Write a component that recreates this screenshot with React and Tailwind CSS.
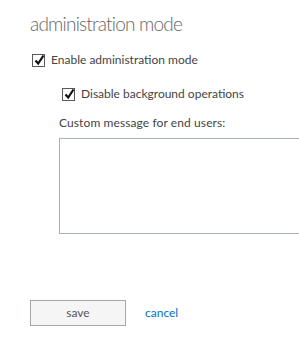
export default function App() {
  const Check = () => (
    <span className="relative inline-block w-[13px] h-[13px] border border-[#5a5a5a] bg-white shrink-0">
      <svg className="absolute left-[1px] top-[-1px]" width="11" height="12" viewBox="0 0 11 12">
        <path d="M1.5 6.5 L4.2 9.5 L9.5 1.5" fill="none" stroke="#111" strokeWidth="2.2" />
      </svg>
    </span>
  );
  return (
    <div className="w-[299px] h-[350px] bg-white overflow-hidden pt-[12px] pl-[30px] text-[#444]" style={{ fontFamily: 'Lato, "Open Sans", sans-serif' }}>
      <div className="text-[19px] leading-[24px] font-light text-[#666] tracking-[-0.8px]">administration mode</div>
      <div className="mt-[16px] h-[16px] flex items-center pl-[2px]">
        <Check />
        <span className="ml-[6px] text-[12px] leading-[16px] text-[#444]">Enable administration mode</span>
      </div>
      <div className="mt-[18px] h-[16px] flex items-center pl-[32px]">
        <Check />
        <span className="ml-[6px] text-[12px] leading-[16px] text-[#444]">Disable background operations</span>
      </div>
      <div className="mt-[13px] pl-[29px] text-[12px] leading-[16px] text-[#444] tracking-[0.1px]">Custom message for end users:</div>
      <div className="mt-[7px] ml-[29px] w-[260px] h-[96px] border border-[#a5b0b0] bg-white"></div>
      <div className="mt-[66px] flex items-center">
        <button className="w-[96px] h-[26px] border border-[#a0a8a8] bg-[#f5f5f5] text-[12px] text-[#555]">save</button>
        <span className="ml-[19px] text-[12px] text-[#0072c6]">cancel</span>
      </div>
    </div>
  );
}
